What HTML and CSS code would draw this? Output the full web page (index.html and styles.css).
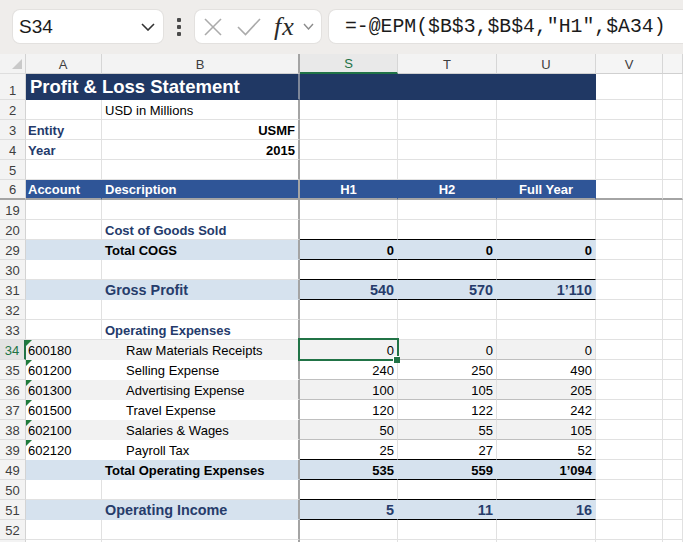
FILE: index.html
```html
<!DOCTYPE html>
<html lang="en">
<head>
    <meta charset="UTF-8">
    <meta name="viewport" content="width=device-width, initial-scale=1.0">
    <title>Profit &amp; Loss Statement</title>
    <link rel="stylesheet" href="styles.css">
</head>
<body>
    <div class="toolbar">
        <div class="namebox">
            <span>S34</span>
            <svg class="chev" width="14" height="8" viewBox="0 0 14 8"><polyline points="1,1 7,7 13,1" /></svg>
        </div>
        <div class="dots"><i></i><i></i><i></i></div>
        <div class="fxbox">
            <svg class="ico-x" width="18" height="18" viewBox="0 0 18 18"><line x1="1" y1="1" x2="17" y2="17" /><line x1="17" y1="1" x2="1" y2="17" /></svg>
            <svg class="ico-ok" width="24" height="18" viewBox="0 0 24 18"><polyline points="1,9 8.5,16.5 23,1" /></svg>
            <span class="fx">fx</span>
            <svg class="chev small" width="11" height="7" viewBox="0 0 11 7"><polyline points="1,1 5.5,6 10,1" /></svg>
        </div>
        <div class="formula">=-@EPM($B$3,$B$4,"H1",$A34)</div>
    </div>

    <div class="sheet">
        <div class="r hd">
            <div class="g corner"><span class="tri"></span></div>
            <div class="a">A</div>
            <div class="b frz">B</div>
            <div class="s on">S</div>
            <div class="t">T</div>
            <div class="u">U</div>
            <div class="v">V</div>
            <div class="w"></div>
        </div>

        <div class="r tall navy">
            <div class="g">1</div>
            <div class="a title frz">Profit &amp; Loss Statement</div>
            <div class="s"></div><div class="t"></div><div class="u"></div>
            <div class="v"></div><div class="w"></div>
        </div>

        <div class="r">
            <div class="g">2</div>
            <div class="a"></div>
            <div class="b frz">USD in Millions</div>
            <div class="s"></div><div class="t"></div><div class="u"></div>
            <div class="v"></div><div class="w"></div>
        </div>

        <div class="r">
            <div class="g">3</div>
            <div class="a lbl">Entity</div>
            <div class="b frz num bold">USMF</div>
            <div class="s"></div><div class="t"></div><div class="u"></div>
            <div class="v"></div><div class="w"></div>
        </div>

        <div class="r">
            <div class="g">4</div>
            <div class="a lbl">Year</div>
            <div class="b frz num bold">2015</div>
            <div class="s"></div><div class="t"></div><div class="u"></div>
            <div class="v"></div><div class="w"></div>
        </div>

        <div class="r">
            <div class="g">5</div>
            <div class="a"></div><div class="b frz"></div>
            <div class="s"></div><div class="t"></div><div class="u"></div>
            <div class="v"></div><div class="w"></div>
        </div>

        <div class="r blue split">
            <div class="g">6</div>
            <div class="a">Account</div>
            <div class="b frz">Description</div>
            <div class="s mid">H1</div>
            <div class="t mid">H2</div>
            <div class="u mid">Full Year</div>
            <div class="v"></div><div class="w"></div>
        </div>

        <div class="r">
            <div class="g">19</div>
            <div class="a"></div><div class="b frz"></div>
            <div class="s"></div><div class="t"></div><div class="u"></div>
            <div class="v"></div><div class="w"></div>
        </div>

        <div class="r">
            <div class="g">20</div>
            <div class="a"></div>
            <div class="b frz lbl">Cost of Goods Sold</div>
            <div class="s"></div><div class="t"></div><div class="u"></div>
            <div class="v"></div><div class="w"></div>
        </div>

        <div class="r band total">
            <div class="g">29</div>
            <div class="a"></div>
            <div class="b frz">Total COGS</div>
            <div class="s num">0</div><div class="t num">0</div><div class="u num">0</div>
            <div class="v"></div><div class="w"></div>
        </div>

        <div class="r">
            <div class="g">30</div>
            <div class="a"></div><div class="b frz"></div>
            <div class="s"></div><div class="t"></div><div class="u"></div>
            <div class="v"></div><div class="w"></div>
        </div>

        <div class="r band total grand">
            <div class="g">31</div>
            <div class="a"></div>
            <div class="b frz">Gross Profit</div>
            <div class="s num">540</div><div class="t num">570</div><div class="u num">1’110</div>
            <div class="v"></div><div class="w"></div>
        </div>

        <div class="r">
            <div class="g">32</div>
            <div class="a"></div><div class="b frz"></div>
            <div class="s"></div><div class="t"></div><div class="u"></div>
            <div class="v"></div><div class="w"></div>
        </div>

        <div class="r">
            <div class="g">33</div>
            <div class="a"></div>
            <div class="b frz lbl">Operating Expenses</div>
            <div class="s"></div><div class="t"></div><div class="u"></div>
            <div class="v"></div><div class="w"></div>
        </div>

        <div class="r line alt">
            <div class="g cur">34</div>
            <div class="a flag">600180</div>
            <div class="b frz ind">Raw Materials Receipts</div>
            <div class="s num sel">0<span class="handle"></span></div><div class="t num">0</div><div class="u num">0</div>
            <div class="v"></div><div class="w"></div>
        </div>

        <div class="r line">
            <div class="g">35</div>
            <div class="a flag">601200</div>
            <div class="b frz ind">Selling Expense</div>
            <div class="s num">240</div><div class="t num">250</div><div class="u num">490</div>
            <div class="v"></div><div class="w"></div>
        </div>

        <div class="r line alt">
            <div class="g">36</div>
            <div class="a flag">601300</div>
            <div class="b frz ind">Advertising Expense</div>
            <div class="s num">100</div><div class="t num">105</div><div class="u num">205</div>
            <div class="v"></div><div class="w"></div>
        </div>

        <div class="r line">
            <div class="g">37</div>
            <div class="a flag">601500</div>
            <div class="b frz ind">Travel Expense</div>
            <div class="s num">120</div><div class="t num">122</div><div class="u num">242</div>
            <div class="v"></div><div class="w"></div>
        </div>

        <div class="r line alt">
            <div class="g">38</div>
            <div class="a flag">602100</div>
            <div class="b frz ind">Salaries &amp; Wages</div>
            <div class="s num">50</div><div class="t num">55</div><div class="u num">105</div>
            <div class="v"></div><div class="w"></div>
        </div>

        <div class="r line">
            <div class="g">39</div>
            <div class="a flag">602120</div>
            <div class="b frz ind">Payroll Tax</div>
            <div class="s num">25</div><div class="t num">27</div><div class="u num">52</div>
            <div class="v"></div><div class="w"></div>
        </div>

        <div class="r band total">
            <div class="g">49</div>
            <div class="a"></div>
            <div class="b frz">Total Operating Expenses</div>
            <div class="s num">535</div><div class="t num">559</div><div class="u num">1’094</div>
            <div class="v"></div><div class="w"></div>
        </div>

        <div class="r">
            <div class="g">50</div>
            <div class="a"></div><div class="b frz"></div>
            <div class="s"></div><div class="t"></div><div class="u"></div>
            <div class="v"></div><div class="w"></div>
        </div>

        <div class="r band total grand">
            <div class="g">51</div>
            <div class="a"></div>
            <div class="b frz">Operating Income</div>
            <div class="s num">5</div><div class="t num">11</div><div class="u num">16</div>
            <div class="v"></div><div class="w"></div>
        </div>

        <div class="r">
            <div class="g">52</div>
            <div class="a"></div><div class="b frz"></div>
            <div class="s"></div><div class="t"></div><div class="u"></div>
            <div class="v"></div><div class="w"></div>
        </div>

        <div class="r">
            <div class="g"></div>
            <div class="a"></div><div class="b frz"></div>
            <div class="s"></div><div class="t"></div><div class="u"></div>
            <div class="v"></div><div class="w"></div>
        </div>
    </div>
</body>
</html>
```

FILE: styles.css
```css
body {
    margin: 0;
    width: 683px;
    height: 542px;
    overflow: hidden;
    background: #ffffff;
    font-family: "Liberation Sans", Arial, sans-serif;
    color: #000;
}

/* --- barra de fórmulas --- */
.toolbar {
    height: 54px;
    box-sizing: border-box;
    padding: 10px 0 11px 13px;
    background: #efedeb;
    display: flex;
    align-items: stretch;
}

.namebox,
.fxbox,
.formula {
    background: #fff;
    border-radius: 7px;
    box-shadow: 0 0 0 1px #e3e1df;
    display: flex;
    align-items: center;
}

.namebox {
    width: 150px;
    padding: 0 8px 0 6px;
    box-sizing: border-box;
    justify-content: space-between;
    font-size: 19px;
    color: #1b1b1b;
}

.chev polyline {
    fill: none;
    stroke: #333;
    stroke-width: 1.6;
}

.chev.small polyline {
    stroke: #8c8c8c;
    stroke-width: 1.4;
}

.dots {
    width: 4px;
    margin: 0 14px;
    display: flex;
    flex-direction: column;
    justify-content: center;
    gap: 3px;
}

.dots i {
    display: block;
    width: 4px;
    height: 4px;
    border-radius: 1px;
    background: #4a4a4a;
}

.fxbox {
    width: 126px;
    padding-left: 9px;
    box-sizing: border-box;
}

.ico-x line,
.ico-ok polyline {
    fill: none;
    stroke: #ababab;
    stroke-width: 1.6;
}

.ico-x { margin-right: 15px; }
.ico-ok { margin-right: 13px; }

.fx {
    font-family: "Liberation Serif", "Times New Roman", serif;
    font-style: italic;
    font-size: 26px;
    letter-spacing: 1px;
    color: #2a2a2a;
    margin-right: 8px;
    line-height: 1;
}

.formula {
    flex: 1;
    margin-left: 8px;
    margin-right: -12px;
    padding-left: 16px;
    font-family: "Liberation Mono", "DejaVu Sans Mono", monospace;
    font-size: 19.8px;
    color: #1b1b1b;
}

/* --- grade da planilha --- */
.r {
    display: grid;
    grid-template-columns: 26px 76px 198px 98px 99px 99px 67px 1fr;
    height: 20px;
}

.r > div {
    box-sizing: border-box;
    border-right: 1px solid #e1e1e1;
    border-bottom: 1px solid #e1e1e1;
    display: flex;
    align-items: flex-end;
    padding: 0 3px 1px;
    font-size: 13px;
    white-space: nowrap;
    overflow: hidden;
}

.r > .a { padding-left: 2px; }

.r > .frz { border-right: 2px solid #a4a4a4; }

.r > .g {
    background: #f3f3f3;
    border-right-color: #d3d3d3;
    border-bottom-color: #dedede;
    justify-content: center;
    color: #3e3e3e;
    padding: 0 0 1px;
}

.r > .g.cur {
    background: #e3e3e3;
    color: #217346;
    border-right: 2px solid #217346;
}

.num { justify-content: flex-end; }
.mid { justify-content: center; }
.bold { font-weight: bold; }

.lbl {
    font-weight: bold;
    color: #243a6b;
}

.r > .ind { padding-left: 24px; }

/* cabeçalho de colunas */
.hd > div {
    background: #f3f3f3;
    border-right-color: #d6d6d6;
    border-bottom-color: #d0d0d0;
    justify-content: center;
    color: #3e3e3e;
}

.hd > .on {
    background: #e9e9e9;
    color: #217346;
    border-bottom: 2px solid #217346;
}

.hd > .v,
.hd > .w { background: #f5f5f5; }

.r > .corner {
    justify-content: flex-end;
    padding: 0 3px 4px 0;
}

.tri {
    width: 0;
    height: 0;
    border-left: 10px solid transparent;
    border-bottom: 10px solid #c9c9c9;
}

/* título */
.r.tall { height: 26px; }

.r > .title {
    grid-column: span 2;
    font-size: 18.5px;
    font-weight: bold;
    color: #fff;
    padding-left: 4px;
}

.navy > .title,
.navy > .s,
.navy > .t,
.navy > .u {
    background: #203864;
    border-bottom-color: transparent;
}

.navy > .s,
.navy > .t,
.navy > .u { border-right-color: transparent; }

.navy > .title { border-right-color: #7d8699; }

/* linha de títulos das colunas */
.blue > .a,
.blue > .b,
.blue > .s,
.blue > .t,
.blue > .u {
    background: #2f5597;
    color: #fff;
    font-weight: bold;
    border-bottom-color: transparent;
}

.blue > .a,
.blue > .s,
.blue > .t,
.blue > .u { border-right-color: transparent; }

.r.split > div { border-bottom: 2px solid #a4a4a4; }

/* faixas de totais */
.band > .a,
.band > .b,
.band > .s,
.band > .t,
.band > .u {
    background: #d6e2ee;
    font-weight: bold;
    border-bottom-color: transparent;
}

.band > .a,
.band > .s,
.band > .t,
.band > .u { border-right-color: transparent; }

/* a borda de cima cobre a linha de grade da linha anterior */
.total > .s,
.total > .t,
.total > .u {
    margin-top: -1px;
    border-top: 1px solid #000;
    border-bottom: 1px solid #000;
}

.grand > .b,
.grand > .s,
.grand > .t,
.grand > .u {
    color: #263c6b;
    font-size: 14.4px;
}

/* linhas de contas */
.line > .a,
.line > .b {
    background: #fff;
    border-bottom-color: transparent;
}

.line > .a { border-right-color: transparent; }

.line > .s,
.line > .t,
.line > .u {
    background: #fff;
    border-bottom-color: #bfbfbf;
}

.line.alt > .a,
.line.alt > .b,
.line.alt > .s,
.line.alt > .t,
.line.alt > .u { background: #f2f2f2; }

.flag { position: relative; }

.flag::before {
    content: "";
    position: absolute;
    top: 0;
    left: 0;
    border-top: 6px solid #1e7a3b;
    border-right: 6px solid transparent;
}

/* célula selecionada */
.r > .sel {
    position: relative;
    overflow: visible;
}

.sel::after {
    content: "";
    position: absolute;
    top: -2px;
    left: -2px;
    right: -2px;
    bottom: -2px;
    border: 2px solid #217346;
}

.handle {
    position: absolute;
    right: -3px;
    bottom: -4px;
    width: 6px;
    height: 6px;
    background: #217346;
    box-shadow: -1px -1px 0 #fff;
    z-index: 2;
}
```
